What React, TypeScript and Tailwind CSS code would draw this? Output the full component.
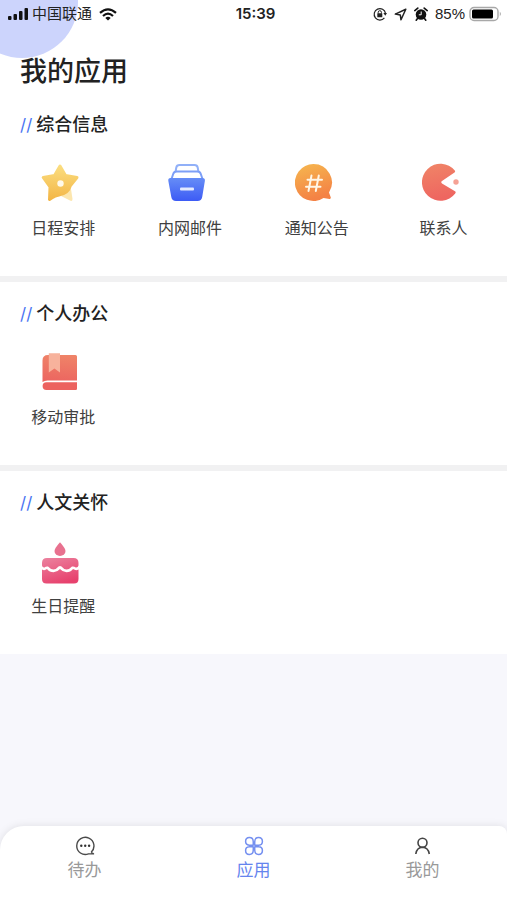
import React from 'react';

interface AppItem {
  label: string;
  icon: () => React.ReactElement;
}

interface AppSection {
  title: string;
  items: AppItem[];
}

function StarIcon() {
  return (
    <svg viewBox="0 0 44 44" className="w-11 h-11" aria-hidden="true">
      <defs>
        <linearGradient id="star-fill" gradientUnits="userSpaceOnUse" x1="19" y1="1" x2="19" y2="38">
          <stop offset="0" stopColor="#fbdf82" />
          <stop offset="1" stopColor="#f3b545" />
        </linearGradient>
      </defs>
      <path d="M20 33 L30 26 L31.5 36 Q31.5 38.500 29.500 37.800 Z" fill="#fce6ae" />
      <path
        d="M19 3 L24.500 12.500 L36 14.500 L29.500 22.500 Q27.500 30.500 18 32 Q13.500 32.800 11.500 34.500 L8.500 36.500 L9 24 L2.200 14.500 L13.500 12.500 Z"
        fill="url(#star-fill)"
        stroke="url(#star-fill)"
        strokeWidth="3"
        strokeLinejoin="round"
      />
      <circle cx="19.500" cy="20.500" r="3.200" fill="#fff9ea" />
    </svg>
  );
}

function MailIcon() {
  return (
    <svg viewBox="0 0 44 44" className="w-11 h-11" aria-hidden="true">
      <defs>
        <linearGradient id="mail-fill" x1="0" y1="0" x2="0" y2="1">
          <stop offset="0" stopColor="#668df6" />
          <stop offset="1" stopColor="#3d5bf5" />
        </linearGradient>
      </defs>
      <path d="M7.500 9 L8.300 4.500 Q8.800 2 11.500 2 H26.500 Q29.200 2 29.700 4.500 L30.500 9" fill="none" stroke="#91b0f8" strokeWidth="2" />
      <path d="M3.500 16 L5.200 11 Q6 8.500 8.500 8.500 H29.500 Q32 8.500 32.800 11 L34.500 16" fill="none" stroke="#7d9ff7" strokeWidth="2" />
      <path d="M2.500 15 H34.500 Q37.200 15 36.900 17.800 L34.200 34 Q33.500 38 29.500 38 H8 Q4 38 3.300 34 L0.300 17.800 Q0 15 2.500 15 Z" fill="url(#mail-fill)" />
      <rect x="12" y="24.500" width="14" height="3" rx="1" fill="#e3eafe" />
    </svg>
  );
}

function NoticeIcon() {
  return (
    <svg viewBox="0 0 44 44" className="w-11 h-11" aria-hidden="true">
      <defs>
        <linearGradient id="notice-fill" x1="0" y1="0" x2="0.3" y2="1">
          <stop offset="0" stopColor="#f6b84f" />
          <stop offset="1" stopColor="#f48245" />
        </linearGradient>
      </defs>
      <path d="M18.500 1 A18.500 18.500 0 0 1 34 29.500 L35.800 34.500 Q36 36.200 34.500 36 L28.500 35 A18.500 18.500 0 1 1 18.500 1 Z" fill="url(#notice-fill)" />
      <path d="M16.500 12.500 L13.500 28 M23.800 12.500 L20.800 28 M12.500 16.800 H27 M11 23.800 H25.500" stroke="#fff6e6" strokeWidth="2" strokeLinecap="round" />
    </svg>
  );
}

function ContactIcon() {
  return (
    <svg viewBox="0 0 44 44" className="w-11 h-11" aria-hidden="true">
      <defs>
        <linearGradient id="contact-fill" x1="0" y1="0" x2="0.2" y2="1">
          <stop offset="0" stopColor="#f08567" />
          <stop offset="1" stopColor="#ee6660" />
        </linearGradient>
      </defs>
      <path d="M32.500 9.500 L20 18 Q18.500 19.200 20 20.400 L33 28.200 Q34.300 29.100 33.200 30.400 A18.500 18.500 0 1 1 32.800 7.600 Q33.600 8.700 32.500 9.500 Z" fill="url(#contact-fill)" />
      <circle cx="34" cy="19" r="2.700" fill="#f5a295" />
    </svg>
  );
}

function ApprovalIcon() {
  return (
    <svg viewBox="0 0 44 44" className="w-11 h-11" aria-hidden="true">
      <defs>
        <linearGradient id="book-fill" x1="0.5" y1="0" x2="0.400" y2="1">
          <stop offset="0" stopColor="#ef8368" />
          <stop offset="1" stopColor="#ec6560" />
        </linearGradient>
      </defs>
      <path d="M7 3 H34.500 Q36 3 36 4.500 V28.500 H6.500 Q3.500 28.500 1.500 30 V8.500 Q1.500 3 7 3 Z" fill="url(#book-fill)" />
      <path d="M7.800 1.200 H19 V20.500 L13.400 16.500 L7.800 20.500 Z" fill="#f7b29c" />
      <path d="M5.500 30.200 H36 V36.800 Q36 38 34.800 38 H5.500 A3.900 3.900 0 0 1 5.500 30.200 Z" fill="#ec625f" />
    </svg>
  );
}

function BirthdayIcon() {
  return (
    <svg viewBox="0 0 44 44" className="w-11 h-11" aria-hidden="true">
      <defs>
        <linearGradient id="cake-fill" gradientUnits="userSpaceOnUse" x1="12" y1="16" x2="20" y2="43">
          <stop offset="0" stopColor="#eb7e9c" />
          <stop offset="1" stopColor="#e7416d" />
        </linearGradient>
      </defs>
      <path d="M19 1.300 Q24.500 7.500 24.500 10 A5.500 5 0 0 1 13.500 10 Q13.500 7.500 19 1.300 Z" fill="#e8718f" />
      <path d="M6 17 H32.500 Q37.500 17 37.500 22 V24.500 Q37 26.800 34.800 26.600 Q33 25.200 31 25.600 Q28.500 28.500 25.500 28.500 Q22.500 28.300 20.500 25.600 Q19 24.600 17.500 25.600 Q15.500 28.300 12.500 28.500 Q9.500 28.500 7 25.600 Q5 25.200 3.500 26.600 Q1.300 26.800 1 24.500 V22 Q1 17 6 17 Z" fill="url(#cake-fill)" />
      <path d="M1 28.500 Q3.500 30 6 28 Q8.500 31.200 12.500 31.300 Q16.500 31 19 28 Q21.500 31 25.500 31.300 Q29.500 31.200 32 28 Q35 30 37.500 28.500 V38 Q37.500 42.500 33 42.500 H5.500 Q1 42.500 1 38 Z" fill="url(#cake-fill)" />
    </svg>
  );
}

const sections: AppSection[] = [
  {
    title: '综合信息',
    items: [
      { label: '日程安排', icon: StarIcon },
      { label: '内网邮件', icon: MailIcon },
      { label: '通知公告', icon: NoticeIcon },
      { label: '联系人', icon: ContactIcon },
    ],
  },
  { title: '个人办公', items: [{ label: '移动审批', icon: ApprovalIcon }] },
  { title: '人文关怀', items: [{ label: '生日提醒', icon: BirthdayIcon }] },
];

function TodoTabIcon() {
  return (
    <svg viewBox="0 0 20 20" className="w-5 h-5" fill="none" aria-hidden="true">
      <path d="M16.200 16.200 A8.600 8.600 0 1 0 13.500 17.900 H18.500 L16.200 16.200" stroke="#4a4a4a" strokeWidth="1.400" strokeLinejoin="round" />
      <circle cx="6.300" cy="9.800" r="1.200" fill="#333333" />
      <circle cx="10.200" cy="9.800" r="1.200" fill="#333333" />
      <circle cx="14.100" cy="9.800" r="1.200" fill="#333333" />
    </svg>
  );
}

function AppsTabIcon() {
  return (
    <svg viewBox="0 0 20 20" className="w-5 h-5" fill="none" stroke="#7590f0" strokeWidth="1.500" strokeLinejoin="round" aria-hidden="true">
      <path d="M9.200 9.200 Q7.500 9.400 5.200 9.200 A3.800 3.800 0 1 1 9.200 5.200 Q9.400 7.500 9.200 9.200 Z" />
      <path d="M10.800 9.200 Q12.500 9.400 14.800 9.200 A3.800 3.800 0 1 0 10.800 5.200 Q10.600 7.500 10.800 9.200 Z" />
      <path d="M9.200 10.800 Q7.500 10.600 5.200 10.800 A3.800 3.800 0 1 0 9.200 14.800 Q9.400 12.500 9.200 10.800 Z" />
      <path d="M10.800 10.800 Q12.500 10.600 14.800 10.800 A3.800 3.800 0 1 1 10.800 14.800 Q10.600 12.500 10.800 10.800 Z" />
    </svg>
  );
}

function MineTabIcon() {
  return (
    <svg viewBox="0 0 20 20" className="w-5 h-5" fill="none" stroke="#444444" strokeWidth="1.600" aria-hidden="true">
      <circle cx="9.500" cy="6.800" r="4.500" />
      <path d="M2.800 18 Q3.800 11.400 9.500 11.300 Q15.200 11.400 16.300 18" />
    </svg>
  );
}

const tabs = [
  { label: '待办', icon: TodoTabIcon, active: false },
  { label: '应用', icon: AppsTabIcon, active: true },
  { label: '我的', icon: MineTabIcon, active: false },
];

function StatusBar() {
  return (
    <div className="relative grid grid-cols-[1fr_auto_1fr] items-center h-7 pl-2 pr-1 text-[15px] leading-5 text-[#222222]">
      <div className="flex items-center">
        <svg viewBox="0 0 20 12" className="w-5 h-3 mr-1" fill="#111111" aria-hidden="true">
          <rect x="0" y="8" width="3.500" height="4" rx="1" />
          <rect x="5.500" y="6" width="3.500" height="6" rx="1" />
          <rect x="11" y="3" width="3.500" height="9" rx="1" />
          <rect x="16.500" y="0" width="3.500" height="12" rx="1" />
        </svg>
        <span>中国联通</span>
        <svg viewBox="0 0 18 13" className="w-[18px] h-[13px] ml-[7px]" fill="none" stroke="#111111" strokeWidth="2.200" aria-hidden="true">
          <path d="M1 4.800 Q9 -2.200 17 4.800" />
          <path d="M4 8 Q9 3.400 14 8" />
          <path d="M6.300 9.900 Q9 7.600 11.700 9.900 L9 12.600 Z" fill="#111111" stroke="none" />
        </svg>
      </div>
      <span className="font-semibold">15:39</span>
      <div className="flex items-center justify-end">
        <div className="flex items-center gap-[7px]">
          <svg viewBox="0 0 14 14" className="w-3.5 h-3.5" aria-hidden="true">
            <path d="M11.400 10.800 A5.700 5.700 0 1 1 12.500 6.400" fill="none" stroke="#222222" strokeWidth="1.200" />
            <path d="M10.400 6 H14 L12.300 8.800 Z" fill="#222222" />
            <rect x="4.300" y="6.300" width="5" height="4" rx="0.500" fill="#222222" />
            <path d="M5.200 6.500 V5.300 A1.600 1.600 0 0 1 8.400 5.300 V6.500" fill="none" stroke="#222222" />
          </svg>
          <svg viewBox="0 0 13 13" className="w-[13px] h-[13px]" fill="none" stroke="#222222" strokeWidth="1.500" strokeLinejoin="round" aria-hidden="true">
            <path d="M11.800 1.200 L1.300 6.100 L6.300 6.900 L7 11.800 Z" />
          </svg>
          <svg viewBox="0 0 14 14" className="w-3.5 h-3.5" aria-hidden="true">
            <circle cx="7" cy="7.500" r="5.300" fill="#111111" />
            <path d="M0.800 3.600 L3.800 1.100 M13.200 3.600 L10.200 1.100 M3.500 11.500 L2.200 13.200 M10.500 11.500 L11.800 13.200" stroke="#111111" strokeWidth="1.600" strokeLinecap="round" />
            <path d="M7.200 4.500 V7.800 H4.800" fill="none" stroke="#ffffff" />
          </svg>
          <span className="font-['Liberation_Sans',sans-serif]">85%</span>
        </div>
        <svg viewBox="0 0 34 16" className="w-[34px] h-4 ml-1" aria-hidden="true">
          <rect x="1" y="1.500" width="28" height="13" rx="4" fill="#ffffff" stroke="#a8a8a8" strokeWidth="1.400" />
          <rect x="3" y="3.500" width="21" height="9" rx="1.500" fill="#000000" />
          <path d="M30.800 5.800 Q33 8 30.800 10.200 Z" fill="#a8a8a8" />
        </svg>
      </div>
    </div>
  );
}

function SectionBlock({ section }: { section: AppSection }) {
  return (
    <section className="bg-white pt-5 pb-[35px]">
      <h2 className="flex items-center gap-1 pl-5 text-lg leading-6 font-medium text-[#222222]">
        <span className="font-normal text-[17px] text-[#4a74f2]" aria-hidden="true">//</span>
        {section.title}
      </h2>
      <div className="grid grid-cols-4 mt-[26px]">
        {section.items.map((item) => {
          const Icon = item.icon;
          return (
            <button key={item.label} type="button" className="flex flex-col items-center gap-2">
              <Icon />
              <span className="text-base leading-[26px] text-[#404040]">{item.label}</span>
            </button>
          );
        })}
      </div>
    </section>
  );
}

export default function App() {
  return (
    <div className="min-h-screen flex flex-col bg-[#f7f7fc] font-[Inter,'Noto_Sans_CJK_SC',sans-serif]">
      <header className="relative overflow-hidden bg-white pb-px">
        {/* Decorative corner circle */}
        <div className="absolute -left-[34px] -top-[54px] w-28 h-28 rounded-full bg-[#ccd4fc]"></div>
        <StatusBar />
        <h1 className="relative pt-6 pl-5 text-[27px] leading-10 font-medium text-[#222222]">我的应用</h1>
      </header>

      <main className="flex flex-col gap-1.5 bg-[#f1f1f2]">
        {sections.map((section) => (
          <SectionBlock key={section.title} section={section} />
        ))}
      </main>

      {/* Bottom tab bar */}
      <nav className="sticky bottom-0 mt-auto grid grid-cols-3 h-[74px] pt-2.5 bg-white rounded-tl-[24px] rounded-tr-lg shadow-[0_0_8px_rgba(0,0,0,0.1)]">
        {tabs.map((tab) => {
          const Icon = tab.icon;
          return (
            <a key={tab.label} href="#" className="flex flex-col items-center gap-0.5" aria-current={tab.active ? 'page' : undefined}>
              <Icon />
              <span className={`text-[17px] leading-6 ${tab.active ? 'text-[#6584ee]' : 'text-[#999999]'}`}>{tab.label}</span>
            </a>
          );
        })}
      </nav>
    </div>
  );
}
